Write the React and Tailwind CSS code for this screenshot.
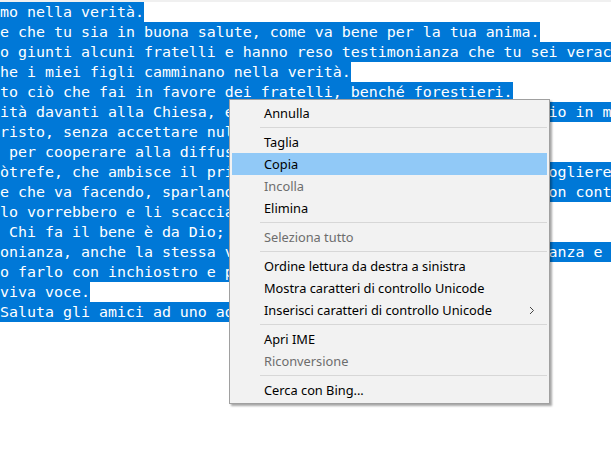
import React from 'react';

const lines = [
    'mo nella verità.',
    'e che tu sia in buona salute, come va bene per la tua anima.',
    'o giunti alcuni fratelli e hanno reso testimonianza che tu sei verace in quanto tu cammini nella verità.',
    'he i miei figli camminano nella verità.',
    'to ciò che fai in favore dei fratelli, benché forestieri.',
    'ità davanti alla Chiesa, e farai bene a provvederli nel viaggio in modo degno di Dio,',
    'risto, senza accettare nulla dai pagani.',
    ' per cooperare alla diffusione della verità.',
    'òtrefe, che ambisce il primo posto tra loro, non ci vuole accogliere.',
    'e che va facendo, sparlando contro di noi con voci maligne. Non contento di questo,',
    'lo vorrebbero e li scaccia dalla Chiesa.',
    ' Chi fa il bene è da Dio; chi fa il male non ha veduto Dio.',
    'onianza, anche la stessa verità; anche noi ne diamo testimonianza e tu sai che la nostra testimonianza è veritiera.',
    'o farlo con inchiostro e penna.',
    'viva voce.',
    'Saluta gli amici ad uno ad uno.',
];

// null = separator
const menu = [
    { label: 'Annulla' },
    null,
    { label: 'Taglia' },
    { label: 'Copia', active: true },
    { label: 'Incolla', disabled: true },
    { label: 'Elimina' },
    null,
    { label: 'Seleziona tutto', disabled: true },
    null,
    { label: 'Ordine lettura da destra a sinistra' },
    { label: 'Mostra caratteri di controllo Unicode' },
    { label: 'Inserisci caratteri di controllo Unicode', submenu: true },
    null,
    { label: 'Apri IME' },
    { label: 'Riconversione', disabled: true },
    null,
    { label: 'Cerca con Bing...' },
];

const MenuItem = ({ item }) => {
    if (!item) {
        return (
            <div className="h-[7px] flex items-center pl-[28px]">
                <div className="h-px w-full bg-[#d7d7d7]"></div>
            </div>
        );
    }
    return (
        <div
            className={`h-[22px] flex items-center pl-[32px] pr-[10px] pt-[1px] ${item.active ? 'bg-[#91c9f7]' : ''} ${item.disabled ? 'text-[#6d6d6d]' : 'text-black'}`}
        >
            <span className="flex-1 whitespace-nowrap">{item.label}</span>
            {item.submenu && (
                <svg width="6" height="9" viewBox="0 0 6 9" className="mr-[2px]">
                    <polyline points="1,1 4.5,4.5 1,8" fill="none" stroke="#444" strokeWidth="1" />
                </svg>
            )}
        </div>
    );
};

const App = () => {
    return (
        <div className="relative w-[611px] h-[458px] bg-white overflow-hidden">
            <div className="h-[2px] bg-[#f0f0f0]"></div>
            <div className="w-full overflow-hidden font-['DejaVu_Sans_Mono',monospace] text-[14.95px] leading-[20px] text-white">
                {lines.map((line, i) => (
                    <div key={i} className="h-[20px] whitespace-pre">
                        <span className="inline-block bg-[#0078d7] h-[20px]">{line}</span>
                    </div>
                ))}
            </div>

            {/* context menu */}
            <div className="absolute left-[229px] top-[99px] w-[321px] bg-[#f2f2f2] border border-[#a0a0a0] p-[2px] shadow-[2px_2px_2px_rgba(0,0,0,0.35)] font-['Noto_Sans',sans-serif] text-[12.8px]">
                {menu.map((item, i) => (
                    <MenuItem key={i} item={item} />
                ))}
            </div>
        </div>
    );
};

export default App;
